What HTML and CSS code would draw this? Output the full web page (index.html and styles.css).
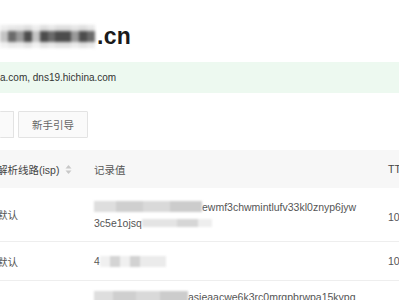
FILE: index.html
```html
<!DOCTYPE html>
<html lang="zh-CN">
<head>
<meta charset="utf-8">
<title>域名解析</title>
<link rel="stylesheet" href="styles.css">
</head>
<body>
<div class="page">
  <h1 class="title">
    <span class="mosaic mosaic-title">
      <i class="c1"></i><i class="c3"></i><i class="c2"></i><i class="c4"></i><i class="c1"></i><i class="c4"></i><i class="c3"></i><i class="c4"></i><i class="c4"></i><i class="c2"></i><i class="c4"></i><i class="c3"></i>
    </span><span class="tld">.cn</span>
  </h1>
  <div class="notice">a.com, dns19.hichina.com</div>
  <div class="toolbar">
    <button class="btn btn-cut"></button>
    <button class="btn">新手引导</button>
  </div>
  <div class="table">
    <div class="row head">
      <div class="cell c-isp">解析线路(isp)
        <svg class="sort" width="7" height="11" viewBox="0 0 7 11"><path d="M3.5 1 L6.5 4.5 H0.5 Z" fill="#c8c8c8"/><path d="M3.5 10 L6.5 6.5 H0.5 Z" fill="#c8c8c8"/></svg>
      </div>
      <div class="cell c-val">记录值</div>
      <div class="cell c-ttl">TT</div>
    </div>
    <div class="row r1">
      <div class="cell c-isp">默认</div>
      <div class="cell c-val">
        <div class="val-line"><span class="blur-block w108"></span><span>ewmf3chwmintlufv33kl0znyp6jyw</span></div>
        <div class="val-line"><span>3c5e1ojsq</span><span class="blur-block w70 faint"></span></div>
      </div>
      <div class="cell c-ttl">10</div>
    </div>
    <div class="row r2">
      <div class="cell c-isp">默认</div>
      <div class="cell c-val"><div class="val-line"><span>4</span><span class="blur-block w66 dots"></span></div></div>
      <div class="cell c-ttl">10</div>
    </div>
    <div class="row r3">
      <div class="cell c-isp"></div>
      <div class="cell c-val"><div class="val-line"><span class="blur-block w94"></span><span>asjeaacwe6k3rc0mrqpbrwpa15kypg</span></div></div>
      <div class="cell c-ttl"></div>
    </div>
  </div>
</div>
</body>
</html>
```

FILE: styles.css
```css
html, body {
  margin: 0;
  padding: 0;
  background: #ffffff;
}
body {
  font-family: "Liberation Sans", "Noto Sans CJK SC", sans-serif;
  color: #333;
  overflow: hidden;
  width: 399px;
  height: 300px;
}
.page {
  display: flex;
  flex-direction: column;
  padding-top: 22px;
}
.title {
  margin: 0;
  height: 28px;
  display: flex;
  align-items: center;
  font-family: "Liberation Sans", Arial, sans-serif;
  font-size: 23px;
  font-weight: 700;
  color: #1a1a1a;
  line-height: 28px;
}
.tld {
  margin-left: 2px;
  letter-spacing: 0.3px;
}
.mosaic-title {
  display: flex;
  width: 95px;
  height: 23px;
  filter: blur(1.4px);
}
.mosaic-title i {
  flex: 1;
  height: 100%;
  display: block;
}
.mosaic-title .c1 { background: linear-gradient(#eeeeee 0 28%, #c4c4c4 28% 74%, #f2f2f2 74%); }
.mosaic-title .c2 { background: linear-gradient(#e6e6e6 0 28%, #9a9a9a 28% 74%, #ececec 74%); }
.mosaic-title .c3 { background: linear-gradient(#e8e8e8 0 28%, #6a6a6a 28% 74%, #eaeaea 74%); }
.mosaic-title .c4 { background: linear-gradient(#dedede 0 28%, #4c4c4c 28% 74%, #e2e2e2 74%); }

.notice {
  margin-top: 12px;
  height: 31px;
  display: flex;
  align-items: center;
  background: #edf9f0;
  font-size: 10px;
  color: #333;
}
.toolbar {
  margin-top: 18px;
  display: flex;
  gap: 4px;
  height: 27px;
}
.btn {
  height: 27px;
  padding: 0 13px;
  border: 1px solid #e3e3e3;
  background: #fafafa;
  color: #666;
  font-family: "Noto Sans CJK SC", sans-serif;
  font-size: 10.5px;
  border-radius: 1px;
}
.btn-cut {
  width: 14px;
  padding: 0;
  border-left: none;
}
.table {
  margin-top: 12px;
  display: flex;
  flex-direction: column;
  font-size: 10.5px;
  color: #555;
}
.row {
  display: grid;
  grid-template-columns: 78px 294px 1fr;
  border-bottom: 1px solid #eeeeee;
  align-items: center;
}
.head {
  height: 38px;
  background: #f7f7f7;
  border-bottom: none;
  color: #444;
}
.r1 { height: 53px; }
.r2 { height: 38px; }
.r3 { height: 40px; border-bottom: none; align-items: start; padding-top: 8px; }
.cell {
  display: flex;
  align-items: center;
  white-space: nowrap;
  font-family: "Liberation Sans", "Noto Sans CJK SC", sans-serif;
}
.c-isp {
  margin-left: -3px;
  gap: 6px;
}
.c-val {
  padding-left: 16px;
  flex-direction: column;
  align-items: flex-start;
  gap: 1px;
  font-size: 10.5px;
  color: #555;
}
.c-ttl {
  padding-left: 16px;
}
.r1 .c-ttl { padding-top: 4px; }
.val-line {
  display: flex;
  align-items: center;
  height: 15px;
}
.blur-block {
  display: inline-block;
  height: 11px;
  background: linear-gradient(90deg, #dedede 0 20%, #cfcfcf 20% 45%, #d9d9d9 45% 70%, #cccccc 70%);
  filter: blur(1px);
}
.blur-block.faint {
  background: linear-gradient(90deg, #e4e4e4 0 50%, #d6d6d6 50% 80%, #eeeeee 80%);
  height: 8px;
}
.blur-block.dots {
  background: linear-gradient(90deg, #f0f0f0 0 15%, #d4d4d4 15% 30%, #f0f0f0 30% 45%, #d2d2d2 45% 60%, #ebebeb 60%);
}
.w108 { width: 108px; }
.w70 { width: 70px; }
.w66 { width: 66px; }
.w94 { width: 94px; }
.sort { display: block; }
```
